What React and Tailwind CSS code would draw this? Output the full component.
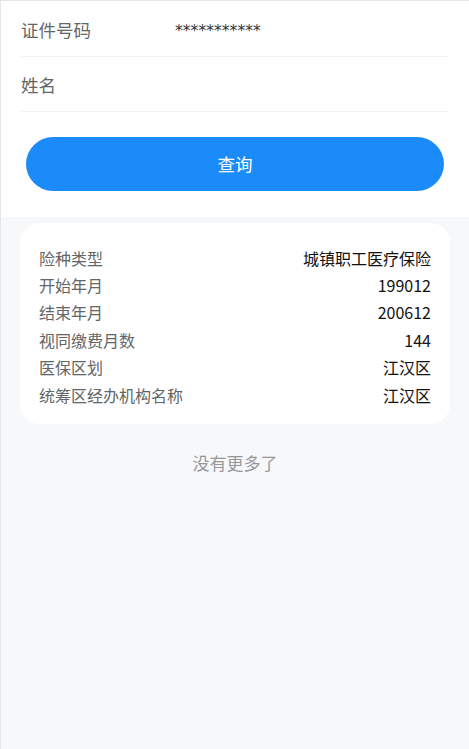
import React from 'react';

const rows = [
    { label: '险种类型', value: '城镇职工医疗保险' },
    { label: '开始年月', value: '199012' },
    { label: '结束年月', value: '200612' },
    { label: '视同缴费月数', value: '144' },
    { label: '医保区划', value: '江汉区' },
    { label: '统筹区经办机构名称', value: '江汉区' },
];

const font = { fontFamily: '"Noto Sans CJK SC", "Noto Sans", sans-serif' };

export default function App() {
    return (
        <div
            className="min-h-[749px] bg-[#f7f8fa] border-t border-l border-[#e6e6e6]"
            style={font}
        >
            {/* Query form */}
            <div className="bg-white">
                <div className="px-[20px]">
                    <div className="flex items-center h-[56px] border-b border-[#f2f3f5]">
                        <span className="w-[154px] shrink-0 text-[17.5px] text-[#646566] mt-[3px]">证件号码</span>
                        <span
                            className="text-[15.6px] text-[#323233] mt-[6px]"
                            style={{ fontFamily: '"DejaVu Sans", sans-serif' }}
                        >
                            ***********
                        </span>
                    </div>
                    <div className="flex items-center h-[55px] border-b border-[#f2f3f5]">
                        <span className="w-[154px] shrink-0 text-[17.5px] text-[#646566] mt-[3px]">姓名</span>
                    </div>
                </div>
                <div className="px-[25px] pt-[25px] pb-[26px]">
                    <button className="w-full h-[54px] rounded-full bg-[#1c8bfa] text-white text-[17.5px]">
                        查询
                    </button>
                </div>
            </div>

            {/* Result card */}
            <div className="mx-[19px] mt-[6px] bg-white rounded-[20px] pt-[21px] pb-[16px] px-[19px]">
                {rows.map((r) => (
                    <div key={r.label} className="flex items-center justify-between h-[27.4px] text-[16px]">
                        <span className="text-[#646566]">{r.label}</span>
                        <span className="text-[#111]">{r.value}</span>
                    </div>
                ))}
            </div>

            <div className="text-center text-[17px] text-[#969799] pt-[26px]">没有更多了</div>
        </div>
    );
}
